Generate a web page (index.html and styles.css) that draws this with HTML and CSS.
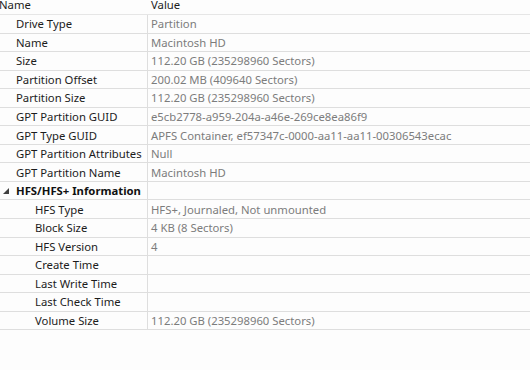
FILE: index.html
```html
<!DOCTYPE html>
<html lang="en">
  <head>
    <meta charset="UTF-8" />
    <title>Partition Properties</title>
    <link rel="stylesheet" href="styles.css">
  </head>
  <body>
    <div class="props">
      <div class="row head">
        <div class="cell name">Name</div>
        <div class="cell value">Value</div>
      </div>

      <div class="row"><div class="cell name">Drive Type</div><div class="cell value">Partition</div></div>
      <div class="row"><div class="cell name">Name</div><div class="cell value">Macintosh HD</div></div>
      <div class="row"><div class="cell name">Size</div><div class="cell value">112.20 GB (235298960 Sectors)</div></div>
      <div class="row"><div class="cell name">Partition Offset</div><div class="cell value">200.02 MB (409640 Sectors)</div></div>
      <div class="row"><div class="cell name">Partition Size</div><div class="cell value">112.20 GB (235298960 Sectors)</div></div>
      <div class="row"><div class="cell name">GPT Partition GUID</div><div class="cell value">e5cb2778-a959-204a-a46e-269ce8ea86f9</div></div>
      <div class="row"><div class="cell name">GPT Type GUID</div><div class="cell value">APFS Container, ef57347c-0000-aa11-aa11-00306543ecac</div></div>
      <div class="row"><div class="cell name">GPT Partition Attributes</div><div class="cell value">Null</div></div>
      <div class="row"><div class="cell name">GPT Partition Name</div><div class="cell value">Macintosh HD</div></div>

      <div class="row group">
        <div class="cell name">
          <svg class="toggle" width="6" height="6" viewBox="0 0 6 6"><path d="M6 0 L6 6 L0 6 Z" fill="#404040"/></svg>
          HFS/HFS+ Information
        </div>
        <div class="cell value"></div>
      </div>

      <div class="row sub"><div class="cell name">HFS Type</div><div class="cell value">HFS+, Journaled, Not unmounted</div></div>
      <div class="row sub"><div class="cell name">Block Size</div><div class="cell value">4 KB (8 Sectors)</div></div>
      <div class="row sub"><div class="cell name">HFS Version</div><div class="cell value">4</div></div>
      <div class="row sub"><div class="cell name">Create Time</div><div class="cell value"></div></div>
      <div class="row sub"><div class="cell name">Last Write Time</div><div class="cell value"></div></div>
      <div class="row sub"><div class="cell name">Last Check Time</div><div class="cell value"></div></div>
      <div class="row sub"><div class="cell name">Volume Size</div><div class="cell value">112.20 GB (235298960 Sectors)</div></div>
    </div>
  </body>
</html>
```

FILE: styles.css
```css
body {
  margin: 0;
  background-color: #fdfdfd;
  font-family: "Noto Sans", "Open Sans", sans-serif;
  font-size: 11.3px;
  overflow: hidden;
}

.props {
  margin-top: -5px;
}

.row {
  display: grid;
  grid-template-columns: 148px 1fr;
  height: 18.56px;
  border-bottom: 1px solid #dedede;
  box-sizing: border-box;
}

.cell {
  display: flex;
  align-items: center;
  white-space: nowrap;
  overflow: hidden;
}

.cell.name {
  padding-left: 16px;
  color: #1c1c1c;
  border-right: 1px solid #dedede;
}

.cell.value {
  padding-left: 3px;
  color: #7c7c7c;
}

/* column header, partly scrolled away */
.row.head {
  height: 20px;
  border-bottom: 1px solid #e6e6e6;
}

.row.head .cell {
  color: #1c1c1c;
  border-right: none;
}

.row.head .cell.name {
  padding-left: 0;
  margin-left: -1px;
}

.row.group .cell.name {
  position: relative;
  font-weight: bold;
  color: #111;
}

.toggle {
  position: absolute;
  left: 3px;
  top: 6px;
}

.row.sub .cell.name {
  padding-left: 35px;
}
```
